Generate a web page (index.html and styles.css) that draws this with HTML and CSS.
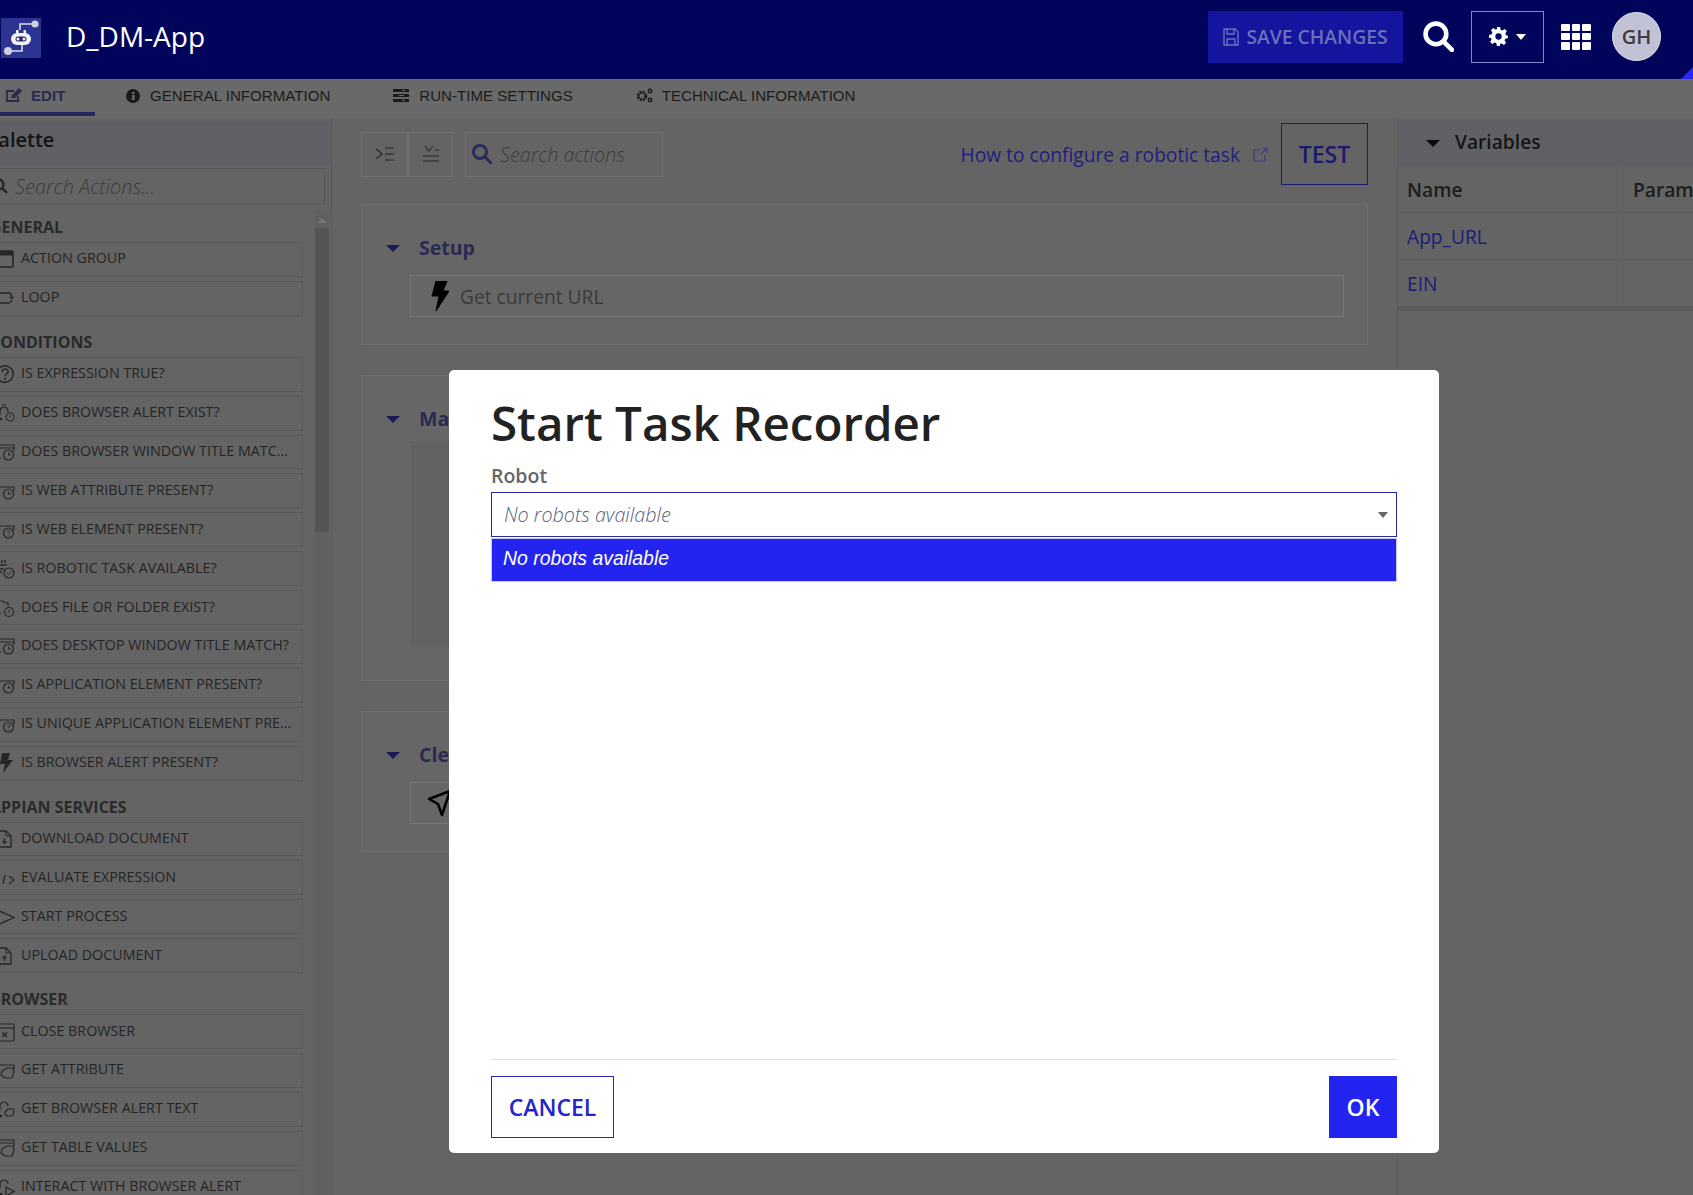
FILE: index.html
```html
<!doctype html>
<html>
<head>
    <meta charset="utf-8">
    <title>D_DM-App</title>
    <link rel="stylesheet" href="styles.css">
</head>
<body>

<!-- icons used by the palette rows -->
<svg class="defs" width="0" height="0">
    <symbol id="i-group" viewBox="0 0 18 20"><rect x="1" y="2" width="15" height="16" rx="1" fill="none" stroke="currentColor" stroke-width="1.600"/><rect x="1" y="2" width="15" height="4.500" fill="currentColor"/></symbol>
    <symbol id="i-loop" viewBox="0 0 18 20"><path d="M1 5h10c2.500 0 3.500 1.500 3.500 3M14.500 12c0 1.500-1 3-3.500 3H1" fill="none" stroke="currentColor" stroke-width="1.400"/><path d="M12 8.500h5.500l-2.700 3z" fill="currentColor"/></symbol>
    <symbol id="i-help" viewBox="0 0 18 20"><circle cx="8" cy="10" r="8.300" fill="none" stroke="currentColor" stroke-width="1.400"/><path d="M5.300 8c0-3.800 5.800-3.800 5.800-.2 0 2.200-3 2.200-3 4.400" fill="none" stroke="currentColor" stroke-width="1.500"/><circle cx="8.100" cy="14.800" r="1.100" fill="currentColor"/></symbol>
    <symbol id="i-alert-q" viewBox="0 0 18 20"><path d="M3 12V8c0-2 2-4 4-4s4 2 4 4v1" fill="none" stroke="currentColor" stroke-width="1.200"/><path d="M5 2.500l2-1.500 2 1.500" fill="none" stroke="currentColor" stroke-width="1"/><circle cx="4" cy="16" r="1.300" fill="currentColor"/><circle cx="13" cy="14" r="4" fill="none" stroke="currentColor" stroke-width="1.100"/><path d="M13 12v2.500" stroke="currentColor"/></symbol>
    <symbol id="i-win-clock" viewBox="0 0 18 20"><path d="M1 3h16v6M1 6h16M1 3v13h3" fill="none" stroke="currentColor" stroke-width="1.200"/><circle cx="11.500" cy="13" r="5" fill="none" stroke="currentColor" stroke-width="1.200"/><path d="M11.500 10.500V13h2.500" fill="none" stroke="currentColor"/></symbol>
    <symbol id="i-web-clock" viewBox="0 0 18 20"><path d="M1 6h16v4M1 15h2" fill="none" stroke="currentColor" stroke-width="1.200"/><circle cx="11.500" cy="13" r="5" fill="none" stroke="currentColor" stroke-width="1.200"/><path d="M11.500 10.500V13h2.500" fill="none" stroke="currentColor"/></symbol>
    <symbol id="i-web-q" viewBox="0 0 18 20"><path d="M1 6h16v4M1 15h2" fill="none" stroke="currentColor" stroke-width="1.200"/><circle cx="11.500" cy="13" r="5" fill="none" stroke="currentColor" stroke-width="1.200"/><path d="M10 11.500c.5-1.500 3-1 3 .3 0 1-1.500 1-1.500 2.200M11.500 15.500v.8" fill="none" stroke="currentColor"/></symbol>
    <symbol id="i-robot-check" viewBox="0 0 18 20"><path d="M5 1v3M8 1v3M2 6h8M1 10h6M2 13h3" fill="none" stroke="currentColor" stroke-width="1.500"/><circle cx="12" cy="14" r="5" fill="none" stroke="currentColor" stroke-width="1.200"/><path d="M9.800 14l1.700 1.700 2.800-3" fill="none" stroke="currentColor"/></symbol>
    <symbol id="i-folder-q" viewBox="0 0 18 20"><path d="M1 3h5l2 2h3v3M1 3v12h3" fill="none" stroke="currentColor" stroke-width="1.200"/><circle cx="12" cy="14" r="4.500" fill="none" stroke="currentColor" stroke-width="1.200"/><path d="M12 12v2.500M12 16v.5" fill="none" stroke="currentColor"/></symbol>
    <symbol id="i-bolt" viewBox="0 0 18 20"><path d="M5 0h8l-2 7h5L6 20l2-9H3z" fill="currentColor"/></symbol>
    <symbol id="i-doc-down" viewBox="0 0 18 20"><path d="M1 2h8l5 5v11H1" fill="none" stroke="currentColor" stroke-width="1.300"/><path d="M9 2v5h5" fill="none" stroke="currentColor"/><path d="M7.500 9v5M5.500 12l2 2.500 2-2.500" fill="none" stroke="currentColor" stroke-width="1.200"/></symbol>
    <symbol id="i-doc-up" viewBox="0 0 18 20"><path d="M1 2h8l5 5v11H1" fill="none" stroke="currentColor" stroke-width="1.300"/><path d="M9 2v5h5" fill="none" stroke="currentColor"/><path d="M7.500 15v-5M5.500 12.500l2-2.500 2 2.500" fill="none" stroke="currentColor" stroke-width="1.200"/></symbol>
    <symbol id="i-code" viewBox="0 0 18 20"><path d="M8 7l-2 9M12 8l5 4-5 4" fill="none" stroke="currentColor" stroke-width="1.300"/></symbol>
    <symbol id="i-start" viewBox="0 0 18 20"><path d="M0 3l17 7.500L0 18" fill="none" stroke="currentColor" stroke-width="1.300"/></symbol>
    <symbol id="i-win-x" viewBox="0 0 18 20"><rect x="1" y="2" width="16" height="17" rx="1" fill="none" stroke="currentColor" stroke-width="1.200"/><path d="M1 6h16" stroke="currentColor" stroke-width="1.200"/><path d="M5.500 10.500l4.500 4.500M10 10.500L5.500 15" stroke="currentColor" stroke-width="1.400"/></symbol>
    <symbol id="i-web-get" viewBox="0 0 18 20"><path d="M1 5h16v4" fill="none" stroke="currentColor" stroke-width="1.200"/><path d="M5 11l5-3h6l1 4-2 6H8l-4-3z" fill="none" stroke="currentColor" stroke-width="1.200"/></symbol>
    <symbol id="i-alert-get" viewBox="0 0 18 20"><path d="M3 11V7c0-2 2-4 4-4s4 2 4 4" fill="none" stroke="currentColor" stroke-width="1.200"/><circle cx="4" cy="17" r="1.300" fill="currentColor"/><path d="M8 13l3-3h5l1 3-1.500 4H10l-2-2z" fill="none" stroke="currentColor" stroke-width="1.200"/></symbol>
    <symbol id="i-table-get" viewBox="0 0 18 20"><path d="M1 2h16v2M1 5h16v3" fill="none" stroke="currentColor" stroke-width="1.200"/><path d="M5 11l5-3h6l1 4-2 6H8l-4-3z" fill="none" stroke="currentColor" stroke-width="1.200"/></symbol>
    <symbol id="i-alert-play" viewBox="0 0 18 20"><path d="M3 11V7c0-2 2-4 4-4s4 2 4 4" fill="none" stroke="currentColor" stroke-width="1.200"/><path d="M9 10l8 4.500L9 19z" fill="none" stroke="currentColor" stroke-width="1.200"/><circle cx="4" cy="17" r="1.300" fill="currentColor"/></symbol>
</svg>

<header class="topbar">
    <svg class="logo" viewBox="0 0 40 40">
        <rect width="40" height="40" fill="#2c3390"/>
        <path d="M31 6H19v6M11 33H21v-6" fill="none" stroke="#dcdce8" stroke-width="1.600"/>
        <circle cx="34" cy="6" r="3.600" fill="#d0d0e0"/>
        <circle cx="7" cy="33" r="4" fill="#d0d0e0"/>
        <rect x="10" y="15" width="20" height="12" rx="6" fill="#f2f2f8"/>
        <path d="M15 15v-3h2.500v3M22.500 15v-3H25v3" fill="#f2f2f8"/>
        <rect x="14.500" y="18.500" width="11" height="5" rx="2.500" fill="#23286e"/>
        <circle cx="17" cy="21" r="1.500" fill="#f2f2f8"/>
        <circle cx="23" cy="21" r="1.500" fill="#f2f2f8"/>
    </svg>
    <div class="app-name">D_DM-App</div>
    <div class="topbar-right">
        <button class="save-btn">
            <svg width="16" height="18" viewBox="0 0 16 18"><path d="M1 1h11l3 3v13H1z M4 1v5h7V1 M4 17v-6h8v6" fill="none" stroke="#6b70b8" stroke-width="1.400"/></svg>
            SAVE CHANGES
        </button>
        <svg class="top-search" viewBox="0 0 30 30"><circle cx="12.500" cy="12.500" r="10" fill="none" stroke="#fff" stroke-width="4.500"/><path d="M20 20l8 8" stroke="#fff" stroke-width="4.500" stroke-linecap="round"/></svg>
        <button class="gear-btn">
            <svg width="19" height="19" viewBox="0 0 24 24"><path fill="#fff" fill-rule="evenodd" d="M10 0h4l.7 3.400 2.200.9L19.800 2.400l2.800 2.800-1.900 2.900.9 2.200L24 11v3l-3.400.7-.9 2.200 1.900 2.900-2.800 2.800-2.900-1.900-2.200.9L14 24h-4l-.7-3.400-2.200-.9-2.900 1.900-2.800-2.800 1.900-2.900-.9-2.200L0 14v-4l3.400-.7.900-2.200-1.900-2.900 2.800-2.800 2.900 1.900 2.200-.9zM12 8a4 4 0 1 0 0 8 4 4 0 0 0 0-8z"/></svg>
            <span class="gear-caret"></span>
        </button>
        <div class="grid-icon">
            <i></i><i></i><i></i><i></i><i></i><i></i><i></i><i></i><i></i>
        </div>
        <div class="avatar">GH</div>
    </div>
    <span class="corner"></span>
</header>

<nav class="tabs">
    <a class="tab tab-active">
        <svg width="16" height="15" viewBox="0 0 16 15"><path d="M12 8v5H1V3h7" fill="none" stroke="#2b2b50" stroke-width="1.800"/><path d="M5 10l1-3 7-7 3 3-7 7z" fill="#2b2b50"/></svg>
        EDIT
    </a>
    <a class="tab">
        <svg width="14" height="14" viewBox="0 0 14 14"><circle cx="7" cy="7" r="7" fill="#1a1a1a"/><rect x="6" y="6" width="2.500" height="5" fill="#6a6a6a"/><rect x="6" y="3" width="2.500" height="2" fill="#6a6a6a"/></svg>
        GENERAL INFORMATION
    </a>
    <a class="tab">
        <svg width="16" height="13" viewBox="0 0 16 13"><path d="M0 0h16v3H0zM0 5h16v3H0zM0 10h16v3H0z" fill="#1a1a1a"/><path d="M9 1h3v1H9zM6 6h5v1H6zM9 11h3v1H9z" fill="#6a6a6a"/></svg>
        RUN-TIME SETTINGS
    </a>
    <a class="tab tab-tech">
        <svg width="17" height="15" viewBox="0 0 17 15"><circle cx="6" cy="8" r="3.800" fill="none" stroke="#1a1a1a" stroke-width="3" stroke-dasharray="2 1"/><circle cx="14" cy="3" r="1.700" fill="none" stroke="#1a1a1a" stroke-width="1.500"/><circle cx="14" cy="12" r="1.700" fill="none" stroke="#1a1a1a" stroke-width="1.500"/></svg>
        TECHNICAL INFORMATION
    </a>
</nav>

<div class="workspace">

    <!-- left column, scrolled a little to the right like the original -->
    <aside class="palette">
        <div class="palette-head"><h2>Palette</h2></div>
        <div class="palette-search">
            <svg width="16" height="16" viewBox="0 0 16 16"><circle cx="6.500" cy="6.500" r="5" fill="none" stroke="#222" stroke-width="2.200"/><path d="M10 10l5 5" stroke="#222" stroke-width="2.200"/></svg>
            <span>Search Actions...</span>
        </div>
        <div class="palette-body">
            <div class="palette-list">
                <h3>GENERAL</h3>
                <div class="act"><svg class="act-icon"><use href="#i-group"/></svg><span>ACTION GROUP</span></div>
                <div class="act"><svg class="act-icon"><use href="#i-loop"/></svg><span>LOOP</span></div>
                <h3>CONDITIONS</h3>
                <div class="act"><svg class="act-icon"><use href="#i-help"/></svg><span>IS EXPRESSION TRUE?</span></div>
                <div class="act"><svg class="act-icon"><use href="#i-alert-q"/></svg><span>DOES BROWSER ALERT EXIST?</span></div>
                <div class="act"><svg class="act-icon"><use href="#i-win-clock"/></svg><span>DOES BROWSER WINDOW TITLE MATCH?</span></div>
                <div class="act"><svg class="act-icon"><use href="#i-web-clock"/></svg><span>IS WEB ATTRIBUTE PRESENT?</span></div>
                <div class="act"><svg class="act-icon"><use href="#i-web-q"/></svg><span>IS WEB ELEMENT PRESENT?</span></div>
                <div class="act"><svg class="act-icon"><use href="#i-robot-check"/></svg><span>IS ROBOTIC TASK AVAILABLE?</span></div>
                <div class="act"><svg class="act-icon"><use href="#i-folder-q"/></svg><span>DOES FILE OR FOLDER EXIST?</span></div>
                <div class="act"><svg class="act-icon"><use href="#i-win-clock"/></svg><span>DOES DESKTOP WINDOW TITLE MATCH?</span></div>
                <div class="act"><svg class="act-icon"><use href="#i-web-clock"/></svg><span>IS APPLICATION ELEMENT PRESENT?</span></div>
                <div class="act"><svg class="act-icon"><use href="#i-web-q"/></svg><span>IS UNIQUE APPLICATION ELEMENT PRESENT?</span></div>
                <div class="act"><svg class="act-icon"><use href="#i-bolt"/></svg><span>IS BROWSER ALERT PRESENT?</span></div>
                <h3>APPIAN SERVICES</h3>
                <div class="act"><svg class="act-icon"><use href="#i-doc-down"/></svg><span>DOWNLOAD DOCUMENT</span></div>
                <div class="act"><svg class="act-icon"><use href="#i-code"/></svg><span>EVALUATE EXPRESSION</span></div>
                <div class="act"><svg class="act-icon"><use href="#i-start"/></svg><span>START PROCESS</span></div>
                <div class="act"><svg class="act-icon"><use href="#i-doc-up"/></svg><span>UPLOAD DOCUMENT</span></div>
                <h3>BROWSER</h3>
                <div class="act"><svg class="act-icon"><use href="#i-win-x"/></svg><span>CLOSE BROWSER</span></div>
                <div class="act"><svg class="act-icon"><use href="#i-web-get"/></svg><span>GET ATTRIBUTE</span></div>
                <div class="act"><svg class="act-icon"><use href="#i-alert-get"/></svg><span>GET BROWSER ALERT TEXT</span></div>
                <div class="act"><svg class="act-icon"><use href="#i-table-get"/></svg><span>GET TABLE VALUES</span></div>
                <div class="act"><svg class="act-icon"><use href="#i-alert-play"/></svg><span>INTERACT WITH BROWSER ALERT</span></div>
            </div>
            <div class="scrollbar">
                <span class="scroll-up"></span>
                <span class="scroll-thumb"></span>
            </div>
        </div>
    </aside>

    <main class="canvas">
        <div class="toolbar">
            <button class="tool-btn">
                <svg width="20" height="16" viewBox="0 0 20 16"><path d="M1 3l6 5-6 5" fill="none" stroke="#2d2d2d" stroke-width="1.500"/><path d="M10 2h9M10 8h9M10 14h9" stroke="#3a3a3a" stroke-width="1.500"/></svg>
            </button>
            <button class="tool-btn">
                <svg width="18" height="18" viewBox="0 0 18 18"><path d="M3 1l4 5 4-5M13 5h4" fill="none" stroke="#3a3a3a" stroke-width="1.500"/><path d="M1 11h16M1 16h16" stroke="#3a3a3a" stroke-width="1.500"/></svg>
            </button>
            <div class="action-search">
                <svg width="20" height="20" viewBox="0 0 20 20"><circle cx="8" cy="8" r="6.500" fill="none" stroke="#2a2a5e" stroke-width="3"/><path d="M13 13l6 6" stroke="#2a2a5e" stroke-width="3" stroke-linecap="round"/></svg>
                <span>Search actions</span>
            </div>
            <a class="help-link">How to configure a robotic task</a>
            <svg class="ext-icon" width="15" height="15" viewBox="0 0 15 15"><path d="M7 3H1v11h11V8M8 7l6-6M9 1h5v5" fill="none" stroke="#3b3b80" stroke-width="1.200"/></svg>
            <button class="test-btn">TEST</button>
        </div>

        <section class="card">
            <div class="card-title"><span class="tri"></span>Setup</div>
            <div class="step">
                <svg class="step-icon" viewBox="0 0 18 30"><path d="M5 0h11l-4 10h6L5 30l3-15H1z" fill="#000" stroke="#000" stroke-linejoin="round"/></svg>
                Get current URL
            </div>
        </section>

        <section class="card">
            <div class="card-title"><span class="tri"></span>Main</div>
            <div class="dropbox"></div>
        </section>

        <section class="card">
            <div class="card-title"><span class="tri"></span>Clean up</div>
            <div class="step">
                <svg class="step-icon send" viewBox="0 0 24 30"><path d="M2 11L23 3 15 27l-4-11z" fill="none" stroke="#000" stroke-width="2.500" stroke-linejoin="round"/></svg>
                Close browser
            </div>
        </section>
    </main>

    <aside class="vars">
        <div class="vars-head"><span class="tri tri-dark"></span>Variables</div>
        <div class="vars-row vars-row-head"><div class="cell-name">Name</div><div class="cell-param">Parameter</div></div>
        <div class="vars-row"><div class="cell-name"><a>App_URL</a></div><div class="cell-param"></div></div>
        <div class="vars-row"><div class="cell-name"><a>EIN</a></div><div class="cell-param"></div></div>
        <div class="vars-end"></div>
    </aside>
</div>

<!-- dialog, sits on top of the dimmed page -->
<div class="modal">
    <h1>Start Task Recorder</h1>
    <label class="field-label">Robot</label>
    <div class="select">
        <span>No robots available</span>
        <i class="select-caret"></i>
    </div>
    <div class="option">No robots available</div>
    <div class="modal-foot">
        <button class="btn-cancel">CANCEL</button>
        <button class="btn-ok">OK</button>
    </div>
</div>

</body>
</html>
```

FILE: styles.css
```css
* { box-sizing: border-box; }
html, body { margin: 0; height: 100%; }
body { width: 1693px; height: 1195px; overflow: hidden; background: #646464; position: relative; font-family: "Open Sans", "Noto Sans", sans-serif; color: #2d2d2d; }
button { font-family: inherit; border: 0; background: none; padding: 0; }
h1, h2, h3 { margin: 0; }
.defs { position: absolute; }

/* top bar */
.topbar { height: 79px; padding-bottom: 6px; background: #00045a; display: flex; align-items: center; position: relative; overflow: hidden; }
.logo { width: 40px; height: 40px; margin: 2px 0 0 1px; display: block; }
.app-name { margin-left: 25px; color: #fff; font-size: 28px; font-weight: 500; line-height: 36px; margin-top: -1px; }
.topbar-right { margin-left: auto; display: flex; align-items: center; padding-right: 32px; }
.save-btn { width: 195px; height: 52px; background: #14149e; color: #6b70b8; font-size: 19.3px; font-weight: 600; display: flex; align-items: center; justify-content: center; gap: 7px; white-space: nowrap; }
.top-search { width: 31px; height: 31px; margin-left: 20px; }
.gear-btn { width: 73px; height: 52px; margin-left: 17px; border: 1px solid #8086cc; display: flex; align-items: center; justify-content: center; gap: 8px; }
.gear-caret { border: 5.5px solid transparent; border-top: 6px solid #fff; border-bottom: 0; }
.grid-icon { width: 30px; height: 26px; margin-left: 17px; display: grid; grid-template-columns: repeat(3, 1fr); grid-template-rows: repeat(3, 1fr); gap: 2px; }
.grid-icon i { background: #fff; border-radius: 1px; }
.avatar { width: 49px; height: 49px; margin-left: 21px; border-radius: 50%; background: #c2c2d6; border: 1px solid #e2e2ee; color: #3c3c3c; font-size: 20px; font-weight: 600; display: flex; align-items: center; justify-content: center; }
.corner { position: absolute; right: 0; bottom: 0; border-style: solid; border-width: 0 0 12px 12px; border-color: transparent transparent #2a2aee transparent; }

/* tabs */
.tabs { height: 39px; background: #696969; display: flex; align-items: flex-start; font-family: "Liberation Sans", Arial, sans-serif; font-size: 15.1px; color: #1c1c1c; }
.tab { display: flex; align-items: center; gap: 10px; padding: 0 31.5px; height: 33px; white-space: nowrap; }
.tab-active { width: 94.5px; padding: 0 0 0 6px; gap: 9px; font-weight: 700; color: #2b2b50; border-bottom: 4px solid #26265e; height: 37px; }
.tab-tech { gap: 9px; }

/* three columns */
.workspace { display: flex; height: 1077px; }

/* palette */
.palette { width: 332px; border-right: 1px solid #5a5a5a; flex: none; overflow: hidden; }
.palette-head { height: 44px; margin-top: 3px; background: #616165; overflow: hidden; }
.palette-head h2 { margin-left: -14px; font-size: 20px; font-weight: 600; line-height: 38px; color: #141414; }
.palette-search { width: 330px; height: 36px; margin: 3px 0 0 -5px; border: 1px solid #585858; display: flex; align-items: center; font-size: 20px; font-style: italic; font-weight: 300; color: #3c3c3c; }
.palette-search svg { margin: 0 7px 0 -4px; flex: none; }
.palette-body { display: flex; }
.palette-list { width: 308px; margin-left: -5px; padding-top: 1px; flex: none; height: 1000px; }
.palette-list h3 { padding-top: 11px; margin-bottom: 4px; margin-left: 5px; font-size: 16px; font-weight: 700; line-height: 22px; color: #2a2a2a; white-space: nowrap; text-indent: -10px; }
.act { height: 34.9px; margin-bottom: 4px; border: 1px solid #585858; display: flex; align-items: center; font-size: 14.3px; line-height: 20px; color: #242424; padding-left: 1px; padding-bottom: 2px; }
.act span { margin-left: 6px; max-width: 270.5px; white-space: nowrap; overflow: hidden; text-overflow: ellipsis; }
.act-icon { width: 18px; height: 20px; flex: none; color: #262626; margin-top: 2px; }
.scrollbar { width: 14px; margin: 6px 0 0 12px; background: #606060; flex: none; height: 1000px; display: flex; flex-direction: column; align-items: center; }
.scroll-up { margin: 8px 0 3px; border: 5px solid transparent; border-bottom: 5px solid #777; border-top: 0; }
.scroll-thumb { width: 14px; margin-top: 2px; height: 304px; background: #545454; }

/* middle */
.canvas { flex: none; width: 1064px; padding: 5px 28px 0 29px; }
.toolbar { display: flex; align-items: center; height: 62px; margin-bottom: 19px; }
.tool-btn { width: 47px; height: 45px; border: 1px solid #727272; display: flex; align-items: center; justify-content: center; }
.tool-btn + .tool-btn { margin-left: 0; width: 45px; }
.action-search { width: 198px; height: 45px; margin-left: 12px; border: 1px solid #727272; display: flex; align-items: center; padding-left: 6px; gap: 8px; font-size: 19.8px; font-style: italic; font-weight: 300; color: #3c3c3c; white-space: nowrap; }
.help-link { margin-left: auto; font-size: 19.2px; color: #1e1e80; white-space: nowrap; }
.ext-icon { margin: 0 13px 0 13px; flex: none; }
.test-btn { width: 87px; height: 62px; border: 1px solid #1b1b70; color: #1a1a6a; font-size: 23px; font-weight: 600; }
.card { border: 1px solid #6e6e6e; padding: 31px 23px 27px 24px; margin-bottom: 30px; background: #666; }
.card-title { display: flex; align-items: center; height: 24px; font-size: 19.5px; font-weight: 700; line-height: 24px; color: #2a2a55; }
.tri { width: 0; height: 0; margin-right: 19px; border: 7px solid transparent; border-top: 7px solid #1d1a5a; border-bottom: 0; }
.tri-dark { border-top-color: #0a0a0a; }
.step { margin: 15px 0 0 24px; height: 42px; border: 1px solid #777; display: flex; align-items: center; padding-left: 20px; font-size: 19.2px; color: #3a3a3a; }
.step-icon { width: 18px; height: 30px; margin-right: 11px; }
.step-icon.send { width: 24px; height: 30px; margin-left: -4px; }
.dropbox { margin: 9px 0 5px 24px; height: 208px; background: #626262; border: 1px dotted #6e6e6e; }

/* variables */
.vars { flex: 1; border-left: 1px solid #5a5a5a; margin-left: 1px; overflow: hidden; }
.vars-head { margin-top: 2px; height: 47px; padding: 0 0 4px 28px; background: #616165; display: flex; align-items: center; font-size: 19.2px; font-weight: 600; color: #141414; }
.vars-head .tri { margin: 4px 15px 0 0; }
.vars-row { display: flex; height: 47px; border-bottom: 1px solid #5f5f5f; font-size: 19.2px; line-height: 48px; white-space: nowrap; }
.vars-row-head { height: 46px; font-weight: 600; color: #1c1c1c; line-height: 46px; }
.vars-row a { color: #1c1c78; }
.cell-name { width: 220px; padding-left: 9px; border-right: 1px solid #5f5f5f; flex: none; }
.cell-param { padding-left: 15px; }
.vars-end { height: 5px; background: #5a5a5a; margin-top: -1px; }

/* dialog */
.modal { position: absolute; left: 449px; top: 370px; width: 990px; height: 783px; background: #fff; border-radius: 5px; padding: 19px 42px 15px 42px; display: flex; flex-direction: column; }
.modal h1 { font-size: 47.5px; font-weight: 600; line-height: 68px; color: #222; white-space: nowrap; }
.field-label { margin-top: 7px; font-size: 19.5px; font-weight: 600; line-height: 24px; color: #666; }
.select { height: 45px; margin-top: 4px; border: 1px solid #2a2aa0; display: flex; align-items: center; justify-content: space-between; padding: 0 8px 0 12px; font-size: 19.8px; font-style: italic; font-weight: 300; color: #5c5f80; }
.select-caret { border: 5px solid transparent; border-top: 6px solid #666; border-bottom: 0; }
.option { height: 44px; margin-top: 1px; background: #2424f0; border: 1px solid #c6c6f4; padding-left: 11px; font-family: "Liberation Sans", Arial, sans-serif; font-size: 19.4px; font-style: italic; line-height: 39px; color: #fff; }
.modal-foot { margin-top: auto; padding-top: 16px; border-top: 1px solid #ddd; display: flex; justify-content: space-between; }
.btn-cancel { width: 123px; height: 62px; border: 1px solid #2a2aa8; color: #2424d0; font-size: 23px; font-weight: 600; }
.btn-ok { width: 68px; height: 62px; background: #2424f0; color: #fff; font-size: 23px; font-weight: 600; }
```
